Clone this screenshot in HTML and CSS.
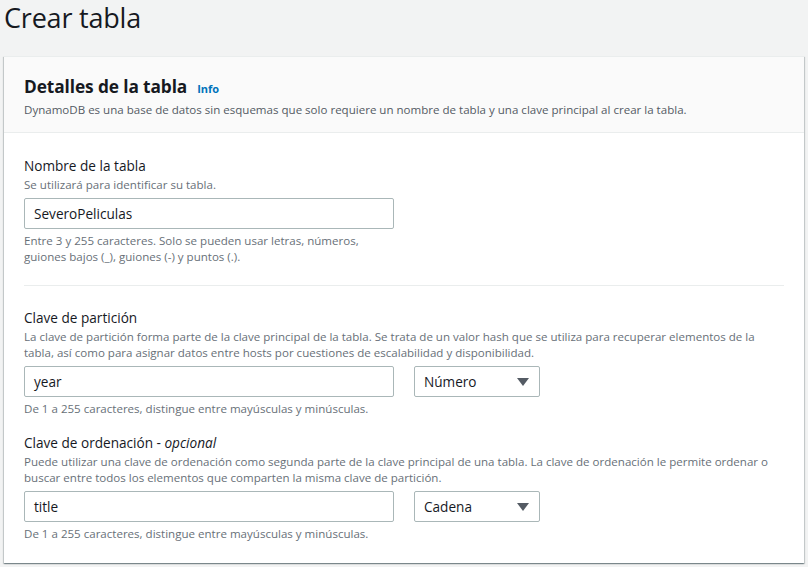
FILE: index.html
```html
<!DOCTYPE html>
<html lang="es">
<head>
<meta charset="utf-8">
<title>Crear tabla</title>
<link rel="stylesheet" href="styles.css">
</head>
<body>
<h1 class="page-title">Crear tabla</h1>
<section class="card">
  <header class="card-header">
    <div class="card-heading">
      <h2 class="card-title">Detalles de la tabla</h2>
      <a class="info" href="#">Info</a>
    </div>
    <p class="card-desc">DynamoDB es una base de datos sin esquemas que solo requiere un nombre de tabla y una clave principal al crear la tabla.</p>
  </header>
  <div class="card-body">
    <div class="field">
      <label class="label">Nombre de la tabla</label>
      <p class="desc">Se utilizará para identificar su tabla.</p>
      <div class="controls">
        <div class="input">SeveroPeliculas</div>
      </div>
      <p class="constraint">Entre 3 y 255 caracteres. Solo se pueden usar letras, números,<br>guiones bajos (_), guiones (-) y puntos (.).</p>
    </div>
    <hr class="divider">
    <div class="field">
      <label class="label">Clave de partición</label>
      <p class="desc">La clave de partición forma parte de la clave principal de la tabla. Se trata de un valor hash que se utiliza para recuperar elementos de la tabla, así como para asignar datos entre hosts por cuestiones de escalabilidad y disponibilidad.</p>
      <div class="controls">
        <div class="input">year</div>
        <div class="select"><span>Número</span><svg class="caret" width="12" height="8" viewBox="0 0 12 8"><path d="M0 0h12L6 8z" fill="#545b64"/></svg></div>
      </div>
      <p class="constraint">De 1 a 255 caracteres, distingue entre mayúsculas y minúsculas.</p>
    </div>
    <div class="field field-tight">
      <label class="label">Clave de ordenación - <em>opcional</em></label>
      <p class="desc">Puede utilizar una clave de ordenación como segunda parte de la clave principal de una tabla. La clave de ordenación le permite ordenar o buscar entre todos los elementos que comparten la misma clave de partición.</p>
      <div class="controls">
        <div class="input">title</div>
        <div class="select"><span>Cadena</span><svg class="caret" width="12" height="8" viewBox="0 0 12 8"><path d="M0 0h12L6 8z" fill="#545b64"/></svg></div>
      </div>
      <p class="constraint">De 1 a 255 caracteres, distingue entre mayúsculas y minúsculas.</p>
    </div>
  </div>
</section>
</body>
</html>
```
FILE: styles.css
```css
* { box-sizing: border-box; }
html, body { margin: 0; padding: 0; }
body {
  background: #f2f3f3;
  font-family: "Open Sans", "Noto Sans", sans-serif;
  color: #16191f;
  width: 808px;
  height: 567px;
  overflow: hidden;
}
.page-title {
  margin: 0;
  padding: 0 0 0 4px;
  height: 56px;
  font-size: 27px;
  font-weight: 400;
  line-height: 36px;
  letter-spacing: -0.2px;
  color: #16191f;
}
.card {
  margin-left: 4px;
  width: 800px;
  background: #fff;
  border-top: 1px solid #eaeded;
  box-shadow: 0 1px 1px 0 rgba(0,28,36,0.3), 1px 1px 1px 0 rgba(0,28,36,0.15), -1px 1px 1px 0 rgba(0,28,36,0.15);
}
.card-header {
  background: #fafafa;
  border-bottom: 1px solid #eaeded;
  padding: 17px 20px 14px 20px;
}
.card-heading {
  display: flex;
  align-items: baseline;
  gap: 10px;
}
.card-title {
  margin: 0;
  font-size: 17.3px;
  line-height: 26px;
  font-weight: 700;
  letter-spacing: -0.1px;
}
.info {
  color: #0073bb;
  font-size: 11px;
  font-weight: 700;
  text-decoration: none;
}
.card-desc {
  margin: 2px 0 0 0;
  font-size: 11.55px;
  line-height: 16px;
  color: #545b64;
}
.card-body {
  padding: 22px 20px 21px 20px;
}
.field { display: flex; flex-direction: column; }
.field-tight { margin-top: 15px; }
.label {
  font-size: 13.6px;
  line-height: 22px;
  color: #16191f;
}
.label em { font-style: italic; }
.desc, .constraint {
  margin: 0;
  font-size: 11.55px;
  line-height: 16px;
  color: #687078;
}
.controls {
  display: flex;
  gap: 20px;
  margin-top: 5px;
}
.input, .select {
  height: 31px;
  border: 1px solid #aab7b8;
  border-radius: 2px;
  background: #fff;
  font-size: 13.6px;
  line-height: 29px;
  color: #16191f;
  padding: 0 9px;
}
.input { width: 370px; }
.select {
  width: 126px;
  display: flex;
  align-items: center;
  justify-content: space-between;
  padding: 0 10px 0 9px;
}
.caret { display: block; }
.constraint { margin-top: 4px; }
.divider {
  border: 0;
  border-top: 1px solid #eaeded;
  margin: 20px 0 21px 0;
}
```
